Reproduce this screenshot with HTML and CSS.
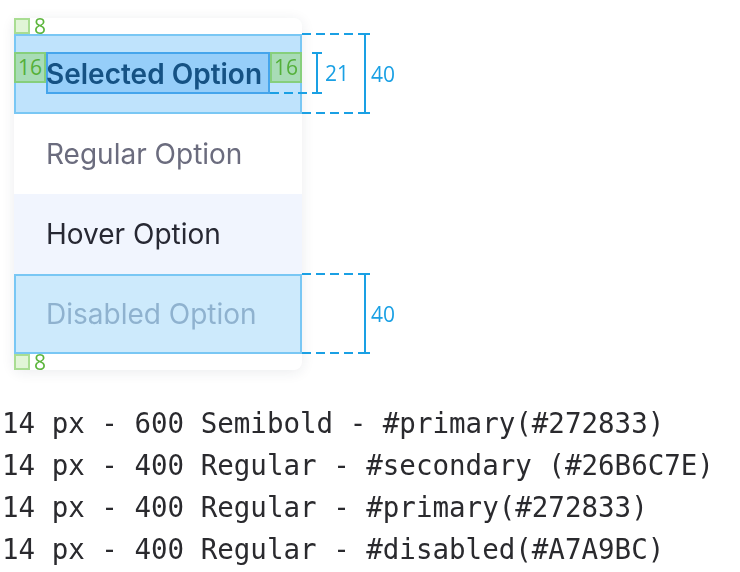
FILE: index.html
```html
<!DOCTYPE html>
<html>
<head>
<meta charset="utf-8">
<link rel="stylesheet" href="styles.css">
</head>
<body>
<div class="stage">
  <div class="menu">
    <div class="item item-selected">Selected Option</div>
    <div class="item item-regular">Regular Option</div>
    <div class="item item-hover">Hover Option</div>
    <div class="item item-disabled">Disabled Option</div>
  </div>

  <!-- spec annotations -->
  <div class="pad-mark pad-top"><span class="pad-sq"></span><span class="pad-num">8</span></div>
  <div class="pad-mark pad-bottom"><span class="pad-sq"></span><span class="pad-num">8</span></div>

  <div class="row-outline sel-outline"></div>
  <div class="text-box"></div>
  <div class="gbox gbox-left">16</div>
  <div class="gbox gbox-right">16</div>

  <div class="dash dash-sel-top"></div>
  <div class="dash dash-sel-bottom"></div>
  <div class="dash dash-txt-bottom"></div>
  <div class="vbar vbar-21"></div>
  <div class="dim dim-21">21</div>
  <div class="vbar vbar-40a"></div>
  <div class="dim dim-40a">40</div>

  <div class="row-outline dis-outline"></div>
  <div class="dash dash-dis-top"></div>
  <div class="dash dash-dis-bottom"></div>
  <div class="vbar vbar-40b"></div>
  <div class="dim dim-40b">40</div>
</div>

<div class="notes">
  <div class="note">14 px - 600 Semibold - #primary(#272833)</div>
  <div class="note">14 px - 400 Regular - #secondary (#26B6C7E)</div>
  <div class="note">14 px - 400 Regular - #primary(#272833)</div>
  <div class="note">14 px - 400 Regular - #disabled(#A7A9BC)</div>
</div>
</body>
</html>
```

FILE: styles.css
```css
* { box-sizing: border-box; }

html, body {
  margin: 0;
  padding: 0;
  background: #ffffff;
}

body {
  font-family: "Inter", "Liberation Sans", sans-serif;
}

.stage {
  position: relative;
  padding: 18px 0 0 14px;
}

.menu {
  width: 288px;
  padding: 16px 0;
  background: #ffffff;
  border-radius: 8px;
  box-shadow: 0 2px 14px rgba(30, 40, 70, 0.09);
  display: flex;
  flex-direction: column;
}

.item {
  height: 80px;
  padding: 0 32px;
  display: flex;
  align-items: center;
  font-size: 28px;
  line-height: 42px;
  white-space: nowrap;
}

.item-selected {
  background: #bfe3fc;
  color: #1a5a86;
  font-weight: 600;
}

.item-regular {
  color: #6b6c7e;
}

.item-hover {
  background: #f1f5fe;
  color: #272833;
}

.item-disabled {
  background: #cdeafc;
  color: #8fb2cf;
}

/* ---------- annotations ---------- */
.row-outline {
  position: absolute;
  left: 14px;
  width: 288px;
  height: 80px;
  border: 2px solid #79c7f4;
}
.sel-outline { top: 34px; }
.dis-outline { top: 274px; }

.text-box {
  position: absolute;
  left: 46px;
  top: 52px;
  width: 224px;
  height: 42px;
  border: 2px solid #5cb9ef;
  background: rgba(100, 190, 245, 0.35);
  mix-blend-mode: multiply;
}

.gbox {
  position: absolute;
  top: 52px;
  width: 32px;
  height: 31px;
  background: #a8dcb6;
  border: 2px solid #86cf7c;
  color: #54b03a;
  font-family: "Open Sans", "Liberation Sans", sans-serif;
  font-size: 21px;
  line-height: 27px;
  text-align: center;
}
.gbox-left { left: 14px; }
.gbox-right { left: 270px; }

.pad-mark {
  position: absolute;
  left: 14px;
  display: flex;
  align-items: center;
  gap: 4px;
  height: 16px;
}
.pad-top { top: 18px; }
.pad-bottom { top: 354px; }

.pad-sq {
  width: 16px;
  height: 16px;
  background: #e1f5d7;
  border: 2px solid #a9dd92;
}
.pad-num {
  color: #5cb53c;
  font-family: "Open Sans", "Liberation Sans", sans-serif;
  font-size: 21px;
  line-height: 16px;
}

.dash {
  position: absolute;
  height: 2px;
  background: repeating-linear-gradient(to right, #1aa0e4 0 9px, transparent 9px 14px);
}
.dash-sel-top { left: 302px; top: 33px; width: 66px; }
.dash-sel-bottom { left: 302px; top: 112px; width: 66px; }
.dash-txt-bottom { left: 270px; top: 92px; width: 50px; }
.dash-dis-top { left: 302px; top: 273px; width: 66px; }
.dash-dis-bottom { left: 302px; top: 352px; width: 66px; }

.vbar {
  position: absolute;
  width: 10px;
  border-top: 2px solid #1aa0e4;
  border-bottom: 2px solid #1aa0e4;
}
.vbar::before {
  content: "";
  position: absolute;
  left: 4px;
  top: 0;
  bottom: 0;
  width: 2px;
  background: #1aa0e4;
}
.vbar-21 { left: 312px; top: 52px; height: 42px; }
.vbar-40a { left: 360px; top: 33px; height: 81px; }
.vbar-40b { left: 360px; top: 273px; height: 81px; }

.dim {
  position: absolute;
  color: #1aa0e4;
  font-family: "Open Sans", "Liberation Sans", sans-serif;
  font-size: 21px;
  line-height: 22px;
}
.dim-21 { left: 325px; top: 62px; }
.dim-40a { left: 371px; top: 63px; }
.dim-40b { left: 371px; top: 303px; }

/* ---------- notes ---------- */
.notes {
  margin-top: 32px;
  padding-left: 2px;
  font-family: "DejaVu Sans Mono", "Liberation Mono", monospace;
  font-size: 27.5px;
  line-height: 42px;
  color: #2a2a2e;
}

.note {
  white-space: nowrap;
}
```
